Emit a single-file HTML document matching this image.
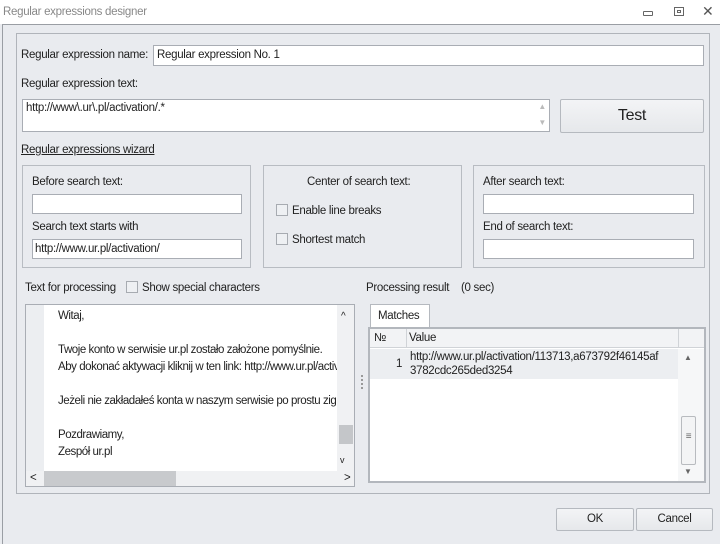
<!DOCTYPE html><html><head><style>
*{box-sizing:border-box;margin:0;padding:0}
body{width:720px;height:541px;position:relative;overflow:hidden;background:#e9ebef;font-family:"Liberation Sans",sans-serif;font-size:11.5px;color:#222;letter-spacing:-0.3px}
.a{position:absolute;white-space:nowrap}
.in{position:absolute;background:#fff;border:1px solid #a9adb4}
.box{position:absolute;border:1px solid #b8bcc2}
.cb{position:absolute;width:12px;height:12px;border:1px solid #a7abb1;background:#eef0f3}
.btn{position:absolute;border:1px solid #b5b9bf;border-radius:2px;background:linear-gradient(#f3f4f6,#e6e8eb);text-align:center}
</style></head><body>
<div class="a" style="left:0;top:0;width:720px;height:24px;background:#fff"></div>
<div class="a" style="left:3px;top:6px;color:#888">Regular expressions designer</div>
<div class="a" style="left:643px;top:11px;width:10px;height:5px;border:1px solid #666;border-radius:1px"></div>
<div class="a" style="left:674px;top:7px;width:10px;height:9px;border:1px solid #666"><div style="margin:2px;width:4px;height:3px;border:1px solid #666"></div></div>
<div class="a" style="left:702px;top:3px;font-size:14px;color:#555">✕</div>
<div class="a" style="left:2px;top:24px;width:720px;height:520px;border-left:1px solid #9a9ea4;border-top:1px solid #9a9ea4"></div>
<div class="box" style="left:16px;top:33px;width:694px;height:461px;border-color:#b0b4ba"></div>
<div class="a" style="left:21px;top:49px">Regular expression name:</div>
<div class="in" style="left:153px;top:45px;width:551px;height:21px"><span class="a" style="left:3px;top:3px">Regular expression No. 1</span></div>
<div class="a" style="left:21px;top:78px">Regular expression text:</div>
<div class="in" style="left:22px;top:99px;width:528px;height:33px"><span class="a" style="left:3px;top:2px">http://www\.ur\.pl/activation/.*</span><span class="a" style="right:3px;top:2px;font-size:8px;color:#bbb">▲</span><span class="a" style="right:3px;top:18px;font-size:8px;color:#bbb">▼</span></div>
<div class="btn" style="left:560px;top:99px;width:144px;height:34px;font-size:16px;line-height:32px">Test</div>
<div class="a" style="left:21px;top:144px;text-decoration:underline">Regular expressions wizard</div>
<div class="box" style="left:22px;top:165px;width:229px;height:103px"></div>
<div class="box" style="left:263px;top:165px;width:199px;height:103px"></div>
<div class="box" style="left:473px;top:165px;width:232px;height:103px"></div>
<div class="a" style="left:32px;top:176px">Before search text:</div>
<div class="in" style="left:32px;top:194px;width:210px;height:20px"></div>
<div class="a" style="left:32px;top:221px">Search text starts with</div>
<div class="in" style="left:32px;top:239px;width:210px;height:20px"><span class="a" style="left:2px;top:3px">http://www.ur.pl/activation/</span></div>
<div class="a" style="left:307px;top:176px">Center of search text:</div>
<div class="cb" style="left:276px;top:204px"></div><div class="a" style="left:292px;top:205px">Enable line breaks</div>
<div class="cb" style="left:276px;top:233px"></div><div class="a" style="left:292px;top:234px">Shortest match</div>
<div class="a" style="left:483px;top:176px">After search text:</div>
<div class="in" style="left:483px;top:194px;width:211px;height:20px"></div>
<div class="a" style="left:483px;top:221px">End of search text:</div>
<div class="in" style="left:483px;top:239px;width:211px;height:20px"></div>
<div class="a" style="left:25px;top:282px">Text for processing</div>
<div class="cb" style="left:126px;top:281px"></div><div class="a" style="left:142px;top:282px">Show special characters</div>
<div class="a" style="left:366px;top:282px">Processing result</div><div class="a" style="left:461px;top:282px">(0 sec)</div>
<div class="in" style="left:25px;top:304px;width:330px;height:183px;background:#eceef1;overflow:hidden">
<div class="a" style="left:18px;top:0;width:293px;height:166px;background:#fff;line-height:17px;padding:3px 0 0 14px;letter-spacing:-0.45px;overflow:hidden">Witaj,<br><br>Twoje konto w serwisie ur.pl zostało założone pomyślnie.<br>Aby dokonać aktywacji kliknij w ten link: http://www.ur.pl/activation<br><br>Jeżeli nie zakładałeś konta w naszym serwisie po prostu zignoruj<br><br>Pozdrawiamy,<br>Zespół ur.pl</div>
<div class="a" style="left:311px;top:0;width:17px;height:166px;background:#f0f1f3"></div>
<div class="a" style="left:313px;top:120px;width:14px;height:19px;background:#c4c6c9"></div>
<div class="a" style="left:315px;top:6px;font-size:10px">^</div>
<div class="a" style="left:314px;top:150px;font-size:9px">v</div>
<div class="a" style="left:0;top:166px;width:328px;height:16px;background:#f0f1f3"></div>
<div class="a" style="left:18px;top:166px;width:132px;height:16px;background:#c8cacd"></div>
<div class="a" style="left:4px;top:167px">&lt;</div><div class="a" style="left:318px;top:167px">&gt;</div>
</div>
<div class="a" style="left:361px;top:375px;width:2px;height:14px;border-left:2px dotted #999"></div>
<div class="a" style="left:370px;top:304px;width:60px;height:24px;background:#fff;border:1px solid #b5b9bf;border-bottom:none;padding:5px 0 0 7px">Matches</div>
<div class="a" style="left:368px;top:327px;width:338px;height:156px;background:#fff;border:2px solid #b3b7bd">
<div class="a" style="left:0;top:0;width:334px;height:19px;background:#f2f3f5;border-bottom:1px solid #d0d3d7"></div>
<div class="a" style="left:36px;top:0;height:19px;border-left:1px solid #d0d3d7"></div>
<div class="a" style="left:308px;top:0;height:19px;border-left:1px solid #d0d3d7"></div>
<div class="a" style="left:4px;top:3px">№</div><div class="a" style="left:39px;top:3px">Value</div>
<div class="a" style="left:0;top:20px;width:308px;height:30px;background:#eceef1"></div>
<div class="a" style="left:26px;top:29px">1</div>
<div class="a" style="left:40px;top:21px;line-height:14px">http://www.ur.pl/activation/113713,a673792f46145af<br>3782cdc265ded3254</div>
<div class="a" style="left:308px;top:20px;width:26px;height:132px;background:#f6f7f8"></div>
<div class="a" style="left:311px;top:87px;width:15px;height:49px;border:1px solid #b8bbbf;border-radius:2px;background:#f3f4f5;text-align:center;padding-top:14px;font-size:10px;color:#666">≡</div>
<div class="a" style="left:314px;top:24px;font-size:8px;color:#666">▲</div>
<div class="a" style="left:314px;top:138px;font-size:8px;color:#666">▼</div>
</div>
<div class="btn" style="left:556px;top:508px;width:78px;height:23px;line-height:21px">OK</div>
<div class="btn" style="left:636px;top:508px;width:77px;height:23px;line-height:21px">Cancel</div>
</body></html>
